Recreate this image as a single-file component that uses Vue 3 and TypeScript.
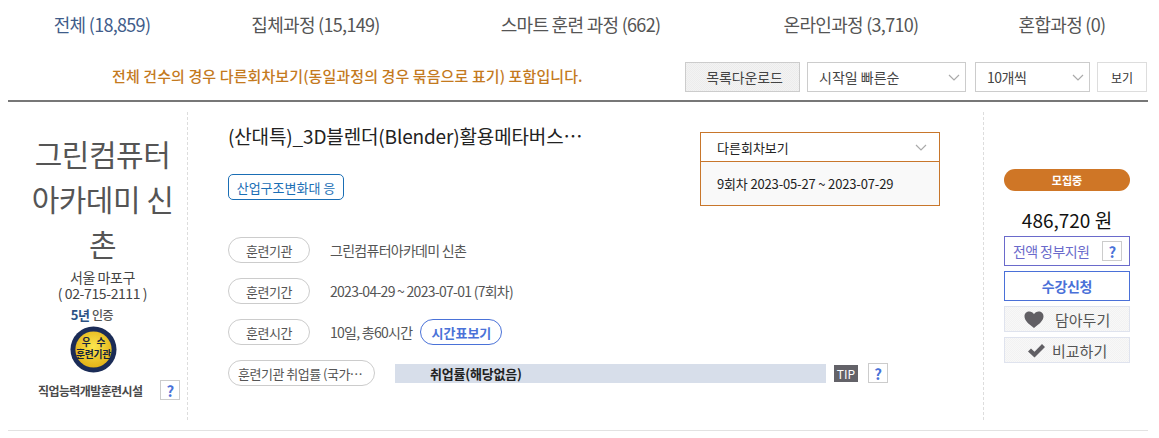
<script setup lang="ts">
const tabs: string[] = ['전체 (18,859)', '집체과정 (15,149)', '스마트 훈련 과정 (662)', '온라인과정 (3,710)', '혼합과정 (0)']
</script>

<template>
  <div class="page">
    <nav class="tabs">
      <a v-for="(t, i) in tabs" :key="t" class="tab" :class="{ first: i === 0 }">{{ t }}</a>
    </nav>
    <div class="toolbar">
      <p class="notice">전체 건수의 경우 다른회차보기(동일과정의 경우 묶음으로 표기) 포함입니다.</p>
      <button class="download">목록다운로드</button>
      <div class="select sort">시작일 빠른순
        <svg class="chev" width="12" height="7" viewBox="0 0 12 7"><path d="M1 1l5 5 5-5" fill="none" stroke="#aaa" stroke-width="1.2" /></svg>
      </div>
      <div class="select size"><span class="size-t">10개씩</span>
        <svg class="chev" width="12" height="7" viewBox="0 0 12 7"><path d="M1 1l5 5 5-5" fill="none" stroke="#aaa" stroke-width="1.2" /></svg>
      </div>
      <button class="view">보기</button>
    </div>

    <section class="card">
      <aside class="org">
        <h2 class="org-name">그린컴퓨터 아카데미 신촌</h2>
        <p class="addr">서울 마포구</p>
        <p class="addr">( 02-715-2111 )</p>
        <p class="cert"><b>5년</b> 인증</p>
        <svg class="medal" width="47" height="47" viewBox="0 0 48 48">
          <defs>
            <radialGradient id="gold" cx="50%" cy="42%" r="60%">
              <stop offset="0" stop-color="#fbe64e" />
              <stop offset="1" stop-color="#e2b016" />
            </radialGradient>
          </defs>
          <circle cx="24" cy="24" r="23.5" fill="#1b2c57" />
          <circle cx="24" cy="24" r="18.5" fill="url(#gold)" />
          <text x="24" y="20.500" text-anchor="middle" class="medal-t top">우 수</text>
          <text x="24" y="33" text-anchor="middle" class="medal-t">훈련기관</text>
        </svg>
        <div class="facility">
          <span>직업능력개발훈련시설</span>
          <span class="q">?</span>
        </div>
      </aside>

      <div class="main">
        <h3 class="title">(산대특)_3D블렌더(Blender)활용메타버스콘텐츠제작</h3>
        <span class="tag">산업구조변화대 응</span>
        <div class="rows">
          <div class="row"><span class="pill">훈련기관</span><span class="val">그린컴퓨터아카데미 신촌</span></div>
          <div class="row"><span class="pill">훈련기간</span><span class="val">2023-04-29 ~ 2023-07-01 (7회차)</span></div>
          <div class="row"><span class="pill">훈련시간</span><span class="val">10일, 총60시간</span><span class="pill timetable">시간표보기</span></div>
          <div class="row">
            <span class="pill wide"><span class="pill-clip">훈련기관 취업률 (국가기간)</span></span>
            <div class="bar">취업률(해당없음)</div>
            <span class="tip">TIP</span>
            <span class="q">?</span>
          </div>
        </div>
      </div>

      <div class="rounds">
        <div class="rounds-head">다른회차보기
          <svg class="chev" width="12" height="7" viewBox="0 0 12 7"><path d="M1 1l5 5 5-5" fill="none" stroke="#aaa" stroke-width="1.2" /></svg>
        </div>
        <div class="rounds-body">9회차 2023-05-27 ~ 2023-07-29</div>
      </div>

      <aside class="side">
        <div class="status">모집중</div>
        <div class="price">486,720 원</div>
        <div class="support"><span>전액 정부지원</span><span class="q">?</span></div>
        <button class="apply">수강신청</button>
        <button class="ghost">
          <svg width="20" height="17" viewBox="0 0 20 17"><path d="M10 17C4 12.500.5 9.500.5 5.300.5 2.400 2.700.5 5.300.5c2 0 3.700 1 4.700 2.800C11 1.500 12.700.5 14.700.5c2.600 0 4.800 1.900 4.800 4.800 0 4.200-3.500 7.200-9.500 11.700z" fill="#615f64" /></svg>
          <span class="g1">담아두기</span>
        </button>
        <button class="ghost">
          <svg width="19" height="15" viewBox="0 0 19 15"><path d="M1 8.500l3-3 3.500 3.300L15 1l3 3-10.500 10.500z" fill="#615f64" /></svg>
          <span class="g2">비교하기</span>
        </button>
      </aside>
    </section>
  </div>
</template>

<style>
html, body { margin: 0; background: #fff; }
</style>

<style scoped>
.page {
  width: 1159px;
  height: 438px;
  overflow: hidden;
  box-sizing: border-box;
  padding: 0 11px 0 8px;
  font-family: "Noto Sans CJK KR", "Noto Sans", sans-serif;
  color: #555;
}
p, h2, h3 { margin: 0; font-weight: 400; }
button { font-family: inherit; padding: 0; cursor: pointer; }

.tabs {
  display: grid;
  grid-template-columns: 188px 239px 291px 250px 172px;
  height: 48px;
  align-items: center;
}
.tab {
  text-align: center;
  font-size: 18px;
  letter-spacing: -0.7px;
  color: #555;
  white-space: nowrap;
}
.tab.first { color: #3f5c8a; }

.toolbar {
  display: flex;
  align-items: center;
  height: 30px;
  margin-top: 14px;
  padding-bottom: 8px;
  border-bottom: 2px solid #777;
}
.notice {
  margin-left: 104px;
  width: 573px;
  padding-bottom: 4px;
  font-size: 15px;
  font-weight: 500;
  letter-spacing: 0.1px;
  color: #c47a1e;
  white-space: nowrap;
}
.download {
  width: 115px;
  height: 30px;
  padding-left: 4px;
  border: 1px solid #ccc;
  background: conic-gradient(#ececec 25%, #f3f3f3 0 50%, #ececec 0 75%, #f3f3f3 0) 0 0 / 2px 2px;
  font-size: 14px;
  letter-spacing: -0.1px;
  color: #444;
}
.select {
  box-sizing: border-box;
  height: 30px;
  border: 1px solid #ccc;
  display: flex;
  align-items: center;
  justify-content: space-between;
  padding: 0 5px 0 11px;
  font-size: 14px;
  color: #444;
}
.size-t { letter-spacing: -0.5px; }
.sort { width: 159px; margin-left: 7px; }
.size { width: 115px; margin-left: 9px; }
.view {
  width: 50px;
  height: 30px;
  margin-left: 7px;
  border: 1px solid #ddd;
  background: #fff;
  font-size: 12px;
  color: #333;
}
.chev { flex: none; }

.card {
  display: flex;
  height: 328px;
  border-bottom: 1px solid #e2e2e2;
  align-items: flex-start;
}
.org {
  box-sizing: border-box;
  width: 180px;
  height: 308px;
  margin-top: 10px;
  border-right: 1px dashed #ddd;
  padding: 19px 8px 0 18px;
  text-align: center;
  flex: none;
}
.org-name {
  font-size: 30px;
  line-height: 45px;
  letter-spacing: -0.5px;
  color: #555;
  margin: 0 0 3px;
  word-break: break-all;
}
.addr { font-size: 14px; line-height: 16px; letter-spacing: -0.4px; color: #444; }
.cert {
  width: 100px;
  margin: 6px 0 0 16px;
  font-size: 12px;
  line-height: 16px;
  font-weight: 500;
  letter-spacing: -0.4px;
  color: #555;
}
.cert b { color: #2c5285; font-weight: 700; font-size: 13px; }
.medal { display: block; margin: 3px 0 0 44px; }
.medal-t {
  font-size: 10px;
  font-weight: 700;
  fill: #14213d;
  font-family: "Noto Sans CJK KR", sans-serif;
  letter-spacing: -0.3px;
}
.medal-t.top { word-spacing: 4px; }
.facility {
  display: flex;
  align-items: center;
  margin: 7px 0 0 12px;
  font-size: 12px;
  font-weight: 700;
  letter-spacing: -0.6px;
  color: #4a4a4a;
  white-space: nowrap;
}
.facility .q { margin-left: 18px; letter-spacing: 0; }
.q {
  box-sizing: border-box;
  flex: none;
  width: 20px;
  height: 20px;
  border: 1px solid #ccc;
  background: #fff;
  display: inline-flex;
  align-items: center;
  justify-content: center;
  font-size: 15px;
  font-weight: 700;
  color: #4a72d8;
  font-family: "Noto Sans CJK KR", sans-serif;
}

.main {
  width: 472px;
  margin-left: 40px;
  padding-top: 21px;
  flex: none;
}
.title {
  width: 357px;
  font-size: 19px;
  line-height: 26px;
  letter-spacing: -0.15px;
  color: #222;
  white-space: nowrap;
  overflow: hidden;
  text-overflow: ellipsis;
}
.tag {
  display: inline-flex;
  box-sizing: border-box;
  align-items: center;
  justify-content: center;
  width: 116px;
  height: 26px;
  margin-top: 25px;
  border: 1px solid #1a6eb5;
  border-radius: 5px;
  font-size: 13px;
  color: #1a6eb5;
  white-space: nowrap;
}
.rows {
  margin-top: 37px;
  display: flex;
  flex-direction: column;
  gap: 15px;
  width: 660px;
}
.row {
  display: flex;
  align-items: center;
  height: 26px;
}
.pill {
  box-sizing: border-box;
  flex: none;
  width: 82px;
  height: 26px;
  border: 1px solid #ccc;
  border-radius: 13px;
  display: inline-flex;
  align-items: center;
  justify-content: center;
  font-size: 13px;
  letter-spacing: -0.5px;
  color: #555;
}
.pill.wide { width: 147px; padding: 0 9px; justify-content: flex-start; }
.pill-clip { overflow: hidden; white-space: nowrap; text-overflow: ellipsis; }
.val {
  margin-left: 20px;
  font-size: 14px;
  letter-spacing: -0.72px;
  color: #555;
  white-space: nowrap;
}
.timetable {
  margin-left: 8px;
  border-color: #4a72d8;
  font-weight: 700;
  font-size: 13px;
  letter-spacing: 0;
  color: #4a72d8;
}
.bar {
  box-sizing: border-box;
  width: 431px;
  height: 19px;
  margin-left: 20px;
  padding-left: 35px;
  background: #d7deea;
  font-size: 13px;
  line-height: 19px;
  font-weight: 700;
  letter-spacing: -0.2px;
  color: #222;
}
.tip {
  width: 24px;
  height: 17px;
  margin-left: 8px;
  background: #636268;
  color: #fff;
  font-size: 12px;
  line-height: 17px;
  text-align: center;
}
.row .q { margin-left: 10px; }

.rounds {
  box-sizing: border-box;
  width: 240px;
  height: 74px;
  margin: 30px 0 0;
  border: 1px solid #c8762b;
  flex: none;
}
.rounds-head {
  height: 29px;
  box-sizing: border-box;
  border-bottom: 1px solid #c8762b;
  display: flex;
  align-items: center;
  justify-content: space-between;
  padding: 0 12px 0 16px;
  font-size: 13px;
  color: #222;
}
.rounds-body {
  height: 43px;
  background: #f9f9f9;
  padding-left: 16px;
  font-size: 13px;
  line-height: 43px;
  letter-spacing: -0.16px;
  color: #222;
}

.side {
  box-sizing: border-box;
  width: 147px;
  height: 308px;
  margin: 10px 0 0 43px;
  border-left: 1px dashed #ddd;
  padding: 57px 0 0 20px;
  flex: none;
  display: flex;
  flex-direction: column;
  align-items: stretch;
}
.side > * { width: 126px; box-sizing: border-box; flex: none; }
.status {
  height: 22px;
  border-radius: 11px;
  background: #cf7626;
  color: #fff;
  font-size: 11px;
  font-weight: 700;
  line-height: 22px;
  text-align: center;
}
.price {
  margin-top: 16px;
  font-size: 19px;
  line-height: 26px;
  color: #111;
  text-align: center;
  height: 26px;
}
.support {
  height: 30px;
  margin-top: 3px;
  border: 1px solid #6a6acb;
  display: flex;
  align-items: center;
  justify-content: space-between;
  padding: 0 7px 0 8px;
  font-size: 14px;
  letter-spacing: -0.6px;
  color: #6a6acb;
}
.apply {
  height: 30px;
  margin-top: 5px;
  border: 1px solid #4a70d8;
  background: #fff;
  font-size: 14px;
  letter-spacing: -0.3px;
  font-weight: 700;
  color: #4a70d8;
}
.ghost {
  height: 26px;
  margin-top: 5px;
  border: 1px solid #dfe3ee;
  background: conic-gradient(#f2f2f2 25%, #f8f8f8 0 50%, #f2f2f2 0 75%, #f8f8f8 0) 0 0 / 2px 2px;
  display: flex;
  align-items: center;
  font-size: 15px;
  color: #555;
  padding-left: 19px;
}
.ghost + .ghost { padding-left: 22px; }
.g1 { margin-left: 11px; }
.g2 { margin-left: 6px; }
</style>
